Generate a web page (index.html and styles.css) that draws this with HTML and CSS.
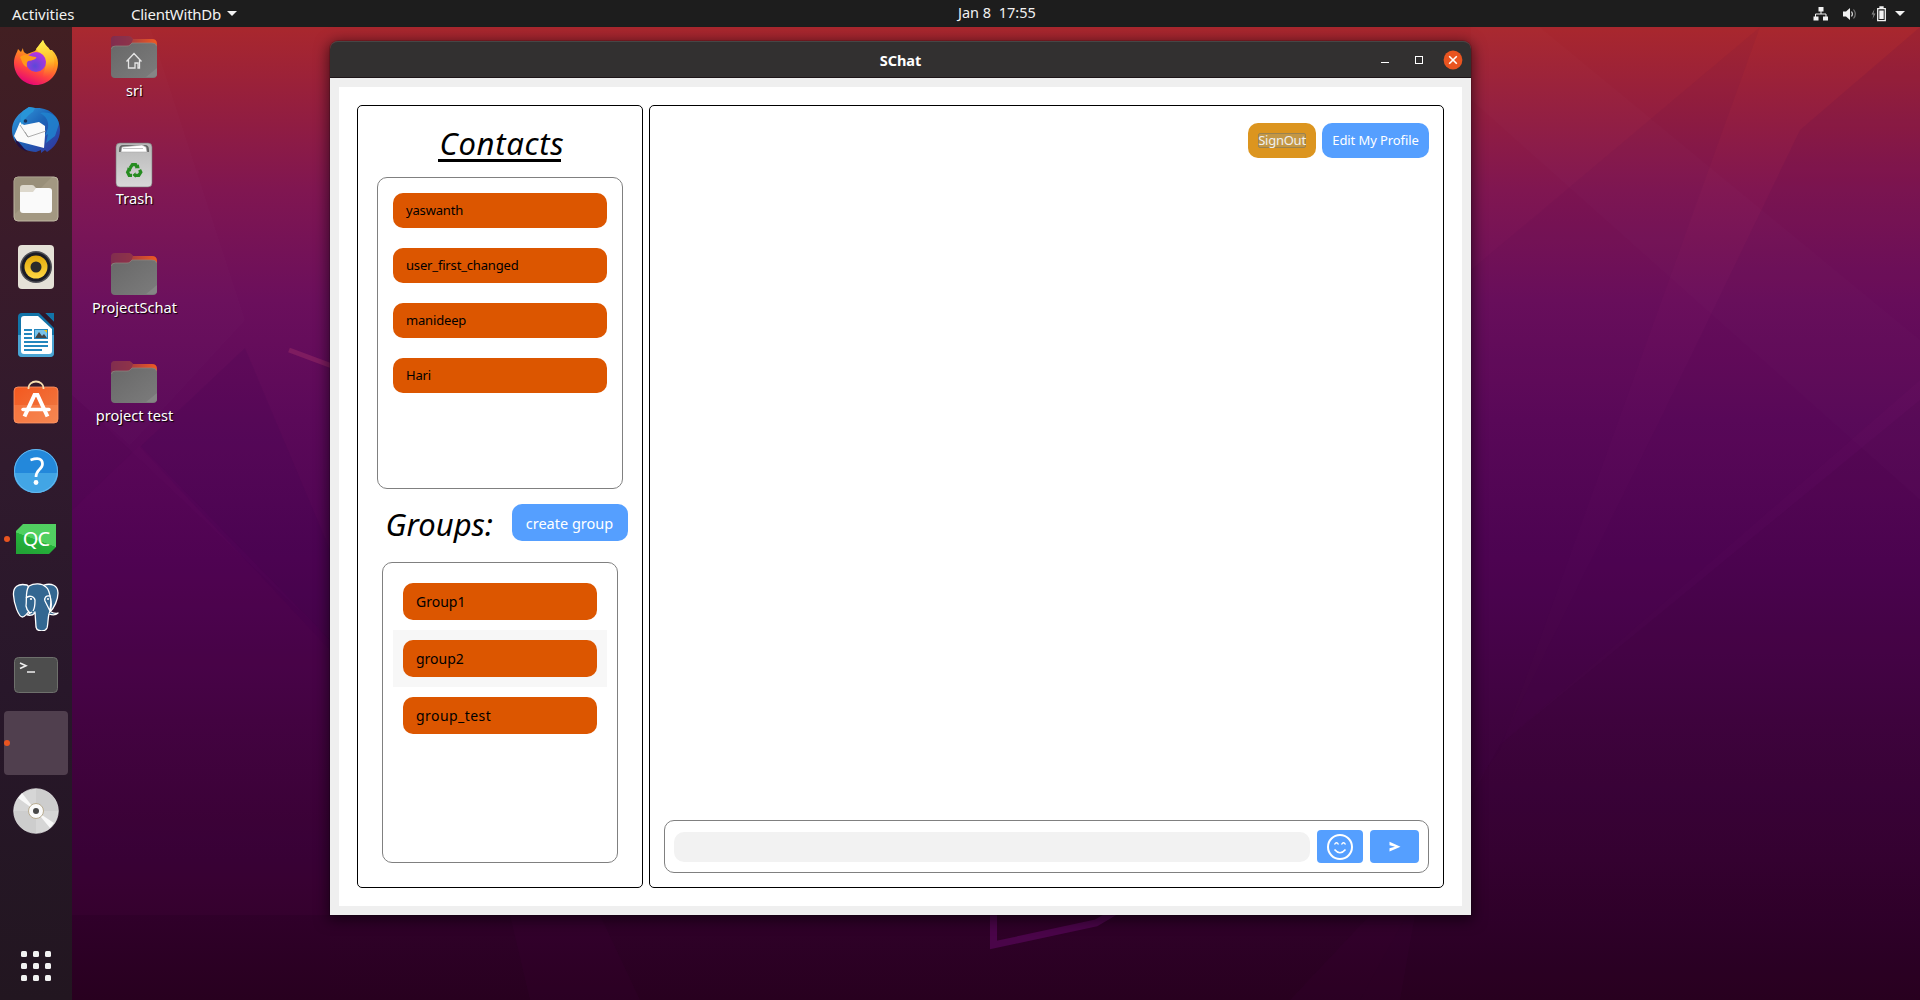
FILE: index.html
```html
<!DOCTYPE html>
<html lang="en">
<head>
<meta charset="utf-8">
<title>SChat</title>
<link rel="stylesheet" href="styles.css">
</head>
<body>
<svg class="wallpaper" viewBox="0 0 1920 1000" aria-hidden="true">
  <path d="M150 27 245 320 130 445 72 395V27Z" fill="#fff" opacity=".01"/>
  <path d="M245 348 140 447 330 650V550Z" fill="#30004a" opacity=".1"/>
  <path d="M72 395 330 640V1000H72Z" fill="#30003a" opacity=".04"/>
  <path d="M72 510 140 445 330 640V915H72Z" fill="#8a1070" opacity=".06"/>
  <path d="M1471 270 1760 27 1500 750 1471 790Z" fill="#40004a" opacity=".05"/>
  <path d="M1500 745 1660 420 1800 130 1920 27V380Z" fill="#40004a" opacity=".09"/>
  <path d="M1500 745 1920 400V1000H1360Z" fill="#24002c" opacity=".07"/>
  <path d="M1471 100 1920 500V340L1540 27H1471Z" fill="#fff" opacity=".01"/>
  <path d="M510 915 530 1000H640L600 915ZM1370 915 1290 1000H1400L1415 915Z" fill="#a000a0" opacity=".03"/>
  <path d="M289 350 332 366" stroke="#7e1c60" stroke-width="5"/>
  <path d="M993.500 910V945L1096 923 1118 910" fill="none" stroke="#4a0549" stroke-width="7"/>
</svg>

<header class="topbar">
  <span class="activities">Activities</span>
  <span class="appmenu"><span class="appname">ClientWithDb</span><i class="caret"></i></span>
  <span class="clock">Jan 8&nbsp; 17:55</span>
  <span class="tray">
    <svg width="16" height="14" viewBox="0 0 16 14"><path d="M5.500 0h5v4.500h-5zM.5 9.500h5v4h-5zM10 9.500h5v4h-5z" fill="#f2f2f2"/><path d="M8 4v3M2.500 10V7h10.500v3" fill="none" stroke="#f2f2f2"/></svg>
    <svg width="16" height="14" viewBox="0 0 16 14"><path d="M1 4.500h3L8 1v12L4 9.500H1z" fill="#f2f2f2"/><path d="M9.500 4.500q1.800 2.500 0 5" fill="none" stroke="#ddd" stroke-width="1.200"/><path d="M11.500 2.500q3.600 4.500 0 9" fill="none" stroke="#777" stroke-width="1.200"/></svg>
    <svg width="16" height="16" viewBox="0 0 16 16"><path d="M3.500 3 .5 8.500h2L1.500 13l3-5.500h-2z" fill="#888"/><path d="M6.700 2.700h7.600v12H6.700zM9 1h3v1.500H9z" fill="none" stroke="#f2f2f2" stroke-width="1.300"/><path d="M8.300 4.500h4.400V13H8.300z" fill="#f2f2f2"/></svg>
    <i class="caret"></i>
  </span>
</header>

<div class="workspace">
  <nav class="dock">
    <div class="slot">
      <svg width="48" height="48" viewBox="0 0 48 48">
        <defs>
          <linearGradient id="ff" x1=".75" y1="0" x2=".3" y2="1"><stop offset="0" stop-color="#fff44f"/><stop offset=".35" stop-color="#ffa018"/><stop offset=".7" stop-color="#ff4440"/><stop offset="1" stop-color="#e3007b"/></linearGradient>
          <linearGradient id="fy" x1=".5" y1="0" x2=".6" y2="1"><stop offset="0" stop-color="#fff44f"/><stop offset=".6" stop-color="#ffb82a"/><stop offset="1" stop-color="#ff6a30" stop-opacity="0"/></linearGradient>
          <radialGradient id="fg" cx=".45" cy=".7" r=".7"><stop offset="0" stop-color="#5b48d8"/><stop offset="1" stop-color="#b833e1"/></radialGradient>
        </defs>
        <path d="M2 24c0-7 3-10 4-14l3 3 2-4c0 4 2 5 4 6l8-3 8-11c2 6 5 6 7 10l2 0c4 4 6 8 6 13 0 12-10 22-22 22S2 36 2 24z" fill="url(#ff)"/>
        <path d="M24 10 31 1c2 6 6 8 9 13 5 8 2 22-8 24-3-1 4-11 1-18-2-4-6-6-9-10z" fill="url(#fy)"/>
        <circle cx="24" cy="23" r="10" fill="url(#fg)"/>
        <path d="M8 18c5-4 8-1 16 0 2 1-4 4-8 4-2 2-1 4-1 6-4-1-5-6-7-10z" fill="#ff9a18"/>
      </svg>
    </div>
    <div class="slot">
      <svg width="48" height="48" viewBox="0 0 48 48">
        <defs><linearGradient id="tb" x1="0" y1="0" x2="1" y2="1"><stop offset="0" stop-color="#38a3e4"/><stop offset=".45" stop-color="#1c65b8"/><stop offset="1" stop-color="#34309b"/></linearGradient></defs>
        <path d="M11 4 17 0l6 1c15-1 25 9 25 22 0 10-6 18-13 22l-2-2-4 3v-3l-5 2C10 44 0 36 0 23 0 15 5 8 11 4z" fill="url(#tb)"/>
        <path d="M3 32c4 2 7 8 13 13C8 42 4 38 3 32z" fill="#211046"/>
        <path d="M8 15 12 18l15-3 6 4 0 10-1 12L5 34 2 29z" fill="#fafafa"/>
        <path d="M8 18 16 30 34 24M16 30l-3-5" fill="none" stroke="#999" stroke-width=".8"/>
        <path d="M11 4 17 0l6 1-2 4c-4 2-8 6-11 13-2-4-2-9 1-14z" fill="#2895d8"/>
        <path d="M28 6c6 3 9 8 8 15l-3 8 3-2-2 9 9-7 4-12C46 9 38 4 28 6z" fill="#2186d0" opacity=".8"/>
        <circle cx="13.500" cy="14" r="1.800" fill="#18345c"/>
      </svg>
    </div>
    <div class="slot">
      <svg width="48" height="48" viewBox="0 0 48 48"><rect x="2" y="2" width="44" height="44" rx="4" fill="#a39882" stroke="#beb6a2"/><path d="M2 6q0-4 4-4h34L3 39z" fill="#8e846f" opacity=".45"/><rect x="8" y="13" width="32" height="25" rx="3" fill="#fafafa"/><path d="M8 17v-4q0-3 3-3h9q2 0 3 2l1 1-3 4z" fill="#ddd8cc"/></svg>
    </div>
    <div class="slot">
      <svg width="48" height="48" viewBox="0 0 48 48"><defs><linearGradient id="sp" x1="0" y1="0" x2="0" y2="1"><stop stop-color="#e2a90b"/><stop offset="1" stop-color="#ffd743"/></linearGradient></defs><rect x="6" y="2" width="36" height="44" rx="4" fill="#e5e1d7"/><circle cx="24" cy="24" r="16" fill="#505056"/><circle cx="24" cy="24" r="14.500" fill="#1b1c26"/><circle cx="24" cy="24" r="11.500" fill="url(#sp)"/><circle cx="24" cy="24" r="5.500" fill="#2b2b2b"/></svg>
    </div>
    <div class="slot">
      <svg width="48" height="48" viewBox="0 0 48 48"><path d="M10 2h19l13 13v27q0 4-4 4H10q-4 0-4-4V6q0-4 4-4z" fill="#1274a8"/><path d="M6 24h36v18q0 4-4 4H10q-4 0-4-4z" fill="#4aa4d3"/><path d="M33 2h9v9z" fill="#1274a8"/><path d="M27 2h6l9 9v6z" fill="#31182a"/><path d="M12 5h14l14 13v22q0 3-3 3H12q-3 0-3-3V8q0-3 3-3z" fill="#fff"/><path d="M12 19h8M12 23h8M12 27h8M12 31h24M12 35h24M12 39h18" stroke="#2386bd" stroke-width="1.800"/><rect x="22.500" y="18.500" width="13" height="9" fill="#77c2ea" stroke="#2386bd"/><path d="m23 27 4-6 3 4 2-2 3 4z" fill="#444"/><path d="M32 19h3v3z" fill="#f5c211"/></svg>
    </div>
    <div class="slot">
      <svg width="48" height="48" viewBox="0 0 48 48"><defs><linearGradient id="so" x1="0" y1="0" x2="1" y2="1"><stop stop-color="#f4581f"/><stop offset="1" stop-color="#ef7c45"/></linearGradient></defs><rect x="2" y="8" width="44" height="36" rx="4" fill="url(#so)" stroke="#ff9568" stroke-width=".8"/><path d="M2 26h44v15q0 3-3 3H5q-3 0-3-3z" fill="#ff9b68" opacity=".35"/><path d="M16.500 10v-1a7.500 6.500 0 0 1 15 0v1" fill="none" stroke="#f8dfb0" stroke-width="1.800"/><path d="M12.500 37.500 22.500 16h3l10 21.500" fill="none" stroke="#fff" stroke-width="4"/><path d="M11 30.500h26" stroke="#fff" stroke-width="3.500" stroke-linecap="round"/></svg>
    </div>
    <div class="slot">
      <svg width="48" height="48" viewBox="0 0 48 48"><circle cx="24" cy="24" r="22" fill="#2388db"/><path d="M2 26h44a22 20 0 0 1-44 0z" fill="#42a5e5"/><circle cx="24" cy="24" r="21.500" fill="none" stroke="#67b8ee" stroke-width="1"/><path d="M18.500 13q12-4 12 4 0 3-3.500 6-3 3-3 7" fill="none" stroke="#fff" stroke-width="2.700"/><circle cx="24" cy="35.500" r="2.400" fill="#fff"/></svg>
    </div>
    <div class="slot">
      <i class="running"></i>
      <span class="qc">QC</span>
    </div>
    <div class="slot">
      <svg width="48" height="48" viewBox="0 0 48 48"><g fill="#336791" stroke="#fff" stroke-width="1.300" stroke-linejoin="round"><path d="M15 2C6 0 1 4 1.500 12c.5 9 5 22 9 22 2 0 4-3 6-5l4-21z"/><path d="M32 2c7-2 14 0 14 8 0 7-4 15-8 19l-5-8z"/><path d="M17 3c5-3 13-3 17 1 4 3 4 9 5 15 1 5-1 10-2 12-1 3-1 11-2 14-2 4-10 4-11-1l-1-15c-5 3-8-1-9-6 1-7-1-15 3-20z"/><path d="M14 15c3-3 8-2 9 2 0 4 0 8-2 11" fill="none"/><path d="M38 13c-4-1-6 2-5 5l5 10c0-4 2-9 0-15z"/><path d="M37 31c3 1 7 1 9-1-3 1-5 0-7-1M23 30c-2 2-5 3-8 2l5-3" /></g><circle cx="19" cy="16" r="1.100" fill="#fff"/><circle cx="36" cy="16" r="1" fill="#fff"/></svg>
    </div>
    <div class="slot">
      <svg width="48" height="48" viewBox="0 0 48 48"><rect x="2.500" y="6.500" width="43" height="35" rx="4" fill="#4d4d4d" stroke="#6e706c"/><path d="m8 12 6 2.800L8 17.500M15 21h8" fill="none" stroke="#eee" stroke-width="1.600"/></svg>
    </div>
    <div class="slot slot-active"><i class="running"></i></div>
    <div class="slot">
      <svg width="48" height="48" viewBox="0 0 48 48"><circle cx="24" cy="24" r="22.300" fill="#d6d6d6" stroke="#ededed" stroke-width=".7"/><path d="M24 24V2A22 22 0 0 1 46 24zM24 24v22A22 22 0 0 1 2 24z" fill="#c9c9c9" opacity=".7"/><path d="M24 24 6 11l4-5zM24 24l18 12-4 5z" fill="#f8f8f8"/><circle cx="24" cy="24" r="7.500" fill="#fafafa" stroke="#b9ac90"/><circle cx="24" cy="24" r="3" fill="#484848"/></svg>
    </div>
    <div class="apps"><i></i><i></i><i></i><i></i><i></i><i></i><i></i><i></i><i></i></div>
  </nav>

  <section class="desktop">
    <div class="shortcut">
      <svg width="48" height="48" viewBox="0 0 48 48"><defs><linearGradient id="fb" x1="0" y1="0" x2="1" y2="0"><stop stop-color="#762753"/><stop offset="1" stop-color="#f05a22"/></linearGradient><linearGradient id="fd" x1="0" y1="0" x2="1" y2="1"><stop stop-color="#686868"/><stop offset="1" stop-color="#7c7c7c"/></linearGradient>
        <g id="folder"><path d="M1 7q0-4 4-4h13q2 0 3 1l2 2h19q5 0 5 5v12H1z" fill="url(#fb)"/><path d="M1 7q0-4 4-4h13q2 0 3 1l2 2-3 8H1z" fill="#84304e" opacity=".75"/><path d="M1 16q0-3 4-3h12q2 0 3-1l2-2h20q5 0 5 4v27q0 4-4 4H5q-4 0-4-4z" fill="url(#fd)"/><path d="M1.500 16q0-3 4-3H17q2 0 3-1l2-2h20q4 0 4.500 3" fill="none" stroke="#92847e" stroke-width=".7"/><path d="M47 35v6q0 3-4 3h-7z" fill="#858585"/></g></defs>
        <use href="#folder"/><path d="M16.500 28.500 24 20.500l7.500 8M18.500 27v8H25v-5h3v5h1.500v-8" fill="none" stroke="#e4e4e4" stroke-width="1.300"/></svg>
      <span class="label">sri</span>
    </div>
    <div class="shortcut">
      <svg width="48" height="48" viewBox="0 0 48 48"><defs><linearGradient id="tr" x1="0" y1="0" x2="0" y2="1"><stop stop-color="#b7b7b7"/><stop offset="1" stop-color="#d8d8d8"/></linearGradient></defs><rect x="6" y="2" width="36" height="44" rx="4" fill="url(#tr)" stroke="#777" stroke-width=".6"/><path d="M9 9q0-5 4-5h22q4 0 4 5v2H9z" fill="#666"/><path d="m11 11 1-5 20-2 4 2 1 5z" fill="#fff" stroke="#aaa" stroke-width=".6"/><path d="M13 7.500h20" stroke="#999" stroke-width=".6"/><g transform="translate(4.800 6.400) scale(.8)"><g fill="none" stroke="#268c20" stroke-width="4"><path d="m19 26 3-4.500h4l2 3.500"/><path d="m31 28 1.500 3-2.500 4h-5"/><path d="M21.500 35H18l-2-4 2-4"/></g><path d="m25 26 6 0-1-5zM26 31v7l-4-3.500zM15 25.500h6l-1 5z" fill="#268c20"/></g></svg>
      <span class="label">Trash</span>
    </div>
    <div class="shortcut">
      <svg width="48" height="48" viewBox="0 0 48 48"><use href="#folder"/></svg>
      <span class="label">ProjectSchat</span>
    </div>
    <div class="shortcut">
      <svg width="48" height="48" viewBox="0 0 48 48"><use href="#folder"/></svg>
      <span class="label">project test</span>
    </div>
  </section>

  <main class="window">
    <div class="titlebar">
      <span class="title">SChat</span>
      <span class="controls">
        <i class="minimize"></i>
        <i class="maximize"></i>
        <svg width="20" height="20" viewBox="0 0 20 20"><circle cx="10" cy="10" r="9.400" fill="#e95420"/><path d="m6.200 6.200 7.600 7.600M13.800 6.200l-7.600 7.600" stroke="#fff" stroke-width="1.600"/></svg>
      </span>
    </div>
    <div class="client">
      <aside class="sidebar">
        <h1 class="heading contacts-heading"><span>Contacts</span></h1>
        <ul class="list contacts">
          <li><button class="entry">yaswanth</button></li>
          <li><button class="entry">user_first_changed</button></li>
          <li><button class="entry">manideep</button></li>
          <li><button class="entry">Hari</button></li>
        </ul>
        <div class="groups-head">
          <h2 class="heading groups-heading">Groups:</h2>
          <button class="btn create">create group</button>
        </div>
        <ul class="list groups">
          <li><button class="entry">Group1</button></li>
          <li class="hovered"><button class="entry">group2</button></li>
          <li><button class="entry entry-wide">group_test</button></li>
        </ul>
      </aside>
      <section class="chat">
        <div class="actions">
          <button class="btn signout"><span>SignOut</span></button>
          <button class="btn profile">Edit My Profile</button>
        </div>
        <form class="composer">
          <input class="message" type="text" aria-label="Message">
          <button type="button" class="btn emoji" aria-label="Emoji"><svg width="28" height="28" viewBox="0 0 28 28" fill="none" stroke="#fff"><circle cx="14" cy="14" r="12" stroke-width="2"/><path d="M8.500 11.500q2-3.500 4 0M15.500 11.500q2-3.500 4 0" stroke-width="1.400"/><path d="M8.500 16.500q5.500 6.500 11 0" stroke-width="1.700"/></svg></button>
          <button type="button" class="btn send" aria-label="Send"><svg width="12" height="12" viewBox="0 0 12 12"><path d="M.5.800 11.500 5.700.5 10.600V7.200L6 5.700.5 4.200z" fill="#fff"/></svg></button>
        </form>
      </section>
    </div>
  </main>
</div>
</body>
</html>
```
FILE: styles.css
```css
* { box-sizing: border-box; }

body {
  margin: 0;
  width: 1920px;
  height: 1000px;
  overflow: hidden;
  display: flex;
  flex-direction: column;
  font-family: "Noto Sans", "Open Sans", sans-serif;
  font-size: 14px;
  background: linear-gradient(180deg, #a8272e 3%, #961f3d 10%, #801651 19%, #6b0f5c 30%, #5b0959 42%, #4e0452 56%, #40043f 72%, #350231 86%, #28001f 100%);
}

h1, h2, ul { margin: 0; padding: 0; }
ul { list-style: none; }
button { font: inherit; border: 0; padding: 0; color: inherit; }
svg { display: block; flex: none; }

.wallpaper {
  position: absolute;
  left: 0;
  top: 0;
  width: 1920px;
  height: 1000px;
  z-index: -1;
}

/* Top panel */
.topbar {
  height: 27px;
  flex: none;
  display: grid;
  grid-template-columns: 119px 827px 1fr auto;
  align-items: center;
  padding: 0 15px 0 12px;
  background: #1d1d1d;
  color: #f2f2f2;
  font-size: 15px;
  line-height: 26px;
}
.appmenu { display: flex; align-items: center; gap: 6px; }
.appname { letter-spacing: -.25px; }
.clock { font-size: 14.500px; line-height: 25px; height: 27px; }
.caret {
  border: 5px solid transparent;
  border-top-color: #f2f2f2;
  border-bottom: 0;
}
.tray { display: flex; align-items: center; gap: 13px; }
.tray .caret { margin-left: -5px; }

.workspace { flex: 1; display: flex; align-items: flex-start; min-height: 0; }

/* Dock */
.dock {
  width: 72px;
  height: 973px;
  flex: none;
  display: flex;
  flex-direction: column;
  align-items: center;
  gap: 4px;
  padding-top: 4px;
  background: linear-gradient(#421f22, #3a1b2a 22%, #301a2d 45%, #28172a 68%, #221620);
}
.slot {
  width: 64px;
  height: 64px;
  flex: none;
  display: flex;
  align-items: center;
  justify-content: center;
  position: relative;
}
.slot-active { background: #503f4e; border-radius: 4px; }
.running {
  position: absolute;
  left: 0;
  top: 29px;
  width: 6px;
  height: 6px;
  border-radius: 50%;
  background: #e95420;
}
.qc {
  width: 40px;
  height: 30px;
  font-size: 20px;
  line-height: 30px;
  text-align: center;
  color: #fff;
  letter-spacing: -1px;
  background: linear-gradient(20deg, #22a336 10%, #27b43c 48%, #50d060 49%, #52cf62);
  clip-path: polygon(7px 0, 100% 0, 100% 23px, 33px 100%, 0 100%, 0 7px);
}
.apps {
  display: grid;
  grid-template-columns: repeat(3, 6px);
  gap: 6px;
  margin-top: 104px;
}
.apps i { height: 6px; border-radius: 1.500px; background: #f2f2f2; }

/* Desktop icons */
.desktop {
  width: 258px;
  flex: none;
  padding: 6px 0 0 12px;
}
.shortcut {
  width: 100px;
  height: 108.400px;
  display: flex;
  flex-direction: column;
  align-items: center;
}
.label {
  color: #fff;
  font-size: 14.600px;
  line-height: 20px;
  margin: -1px 0 0 1px;
  white-space: nowrap;
  text-shadow: 1px 1px 1px #000;
}

/* Window */
.window {
  width: 1141px;
  height: 874px;
  flex: none;
  margin-top: 14px;
  border-radius: 8px 8px 0 0;
  box-shadow: 0 3px 14px 2px rgba(0, 0, 0, .55), 0 0 0 1px rgba(0, 0, 0, .15);
}
.titlebar {
  height: 37px;
  display: grid;
  grid-template-columns: 1fr auto 1fr;
  align-items: center;
  padding-right: 8px;
  border-radius: 8px 8px 0 0;
  border-top: 1px solid #474545;
  border-bottom: 1px solid #1d1518;
  background: #323030;
  color: #fff;
}
.title { grid-column: 2; margin-left: 8px; font-weight: 700; font-size: 14.500px; }
.controls { display: flex; align-items: center; justify-content: flex-end; }
.minimize { width: 8px; height: 1px; margin: 5px 26px 0 0; background: #fff; }
.maximize { width: 8px; height: 8px; margin-right: 20px; border: 1px solid #fff; }
.client {
  height: 837px;
  display: flex;
  gap: 6px;
  padding: 18px;
  border: 9px solid #efefef;
  background: #fff;
}
.sidebar, .chat { border: 1px solid #000; border-radius: 5px; }
.sidebar {
  width: 286px;
  flex: none;
  display: flex;
  flex-direction: column;
  align-items: center;
}
.heading {
  font-style: italic;
  font-weight: 400;
  font-size: 31px;
  line-height: 40px;
  color: #000;
}
.contacts-heading { height: 71px; padding-top: 17px; }
.contacts-heading span {
  display: block;
  height: 39px;
  width: 123px;
  margin-right: 2px;
  padding-left: 2px;
  letter-spacing: .7px;
  white-space: nowrap;
  border-bottom: 3px solid #000;
}
.list { border: 1px solid #808080; border-radius: 10px; }
.entry {
  display: block;
  width: 100%;
  padding-left: 13px;
  text-align: left;
  color: #000;
  border-radius: 10px;
  background: #dc5600;
}
.contacts {
  width: 246px;
  height: 312px;
  padding: 15px;
  display: flex;
  flex-direction: column;
  gap: 20px;
}
.contacts .entry {
  height: 35px;
  padding-bottom: 1px;
  font-size: 13px;
  line-height: 33px;
  letter-spacing: -.17px;
}
.groups-head {
  display: flex;
  align-items: flex-start;
  justify-content: space-between;
  width: 256px;
  height: 58px;
  margin: 15px 0 0 -1px;
  padding-left: 14px;
}
.btn {
  display: flex;
  align-items: center;
  justify-content: center;
  border-radius: 10px;
  background: #559fff;
  color: #fff;
  white-space: nowrap;
}
.create { width: 116px; height: 37px; font-size: 14.500px; }
.groups {
  width: 236px;
  height: 301px;
  padding: 10px;
}
.groups li { padding: 10px; }
.groups .entry { height: 37px; line-height: 36px; }
.groups .entry-wide { letter-spacing: .45px; }
.groups .hovered { background: #f7f7f7; }

.chat {
  flex: 1;
  display: flex;
  flex-direction: column;
  justify-content: space-between;
  padding: 17px 14px 14px;
}
.actions { display: flex; justify-content: flex-end; gap: 6px; font-size: 13px; }
.signout { width: 68px; height: 35px; background: #dc951f; }
.signout span {
  width: 48px;
  height: 15px;
  line-height: 13px;
  display: flex;
  justify-content: center;
  letter-spacing: -.25px;
  border: 1px solid #9b8350;
  border-radius: 2px;
  background: #c39745;
  color: #f0f0f0;
}
.profile { width: 107px; height: 35px; padding-bottom: 1px; letter-spacing: -.1px; }
.composer {
  height: 53px;
  display: flex;
  align-items: center;
  padding: 0 9px;
  border: 1px solid #808080;
  border-radius: 10px;
}
.message {
  flex: 1;
  height: 30px;
  border: 0;
  border-radius: 10px;
  background: #f2f2f2;
}
.emoji, .send { height: 33px; border-radius: 4px; }
.emoji { width: 46px; margin: 0 7px; }
.send { width: 49px; }
```
